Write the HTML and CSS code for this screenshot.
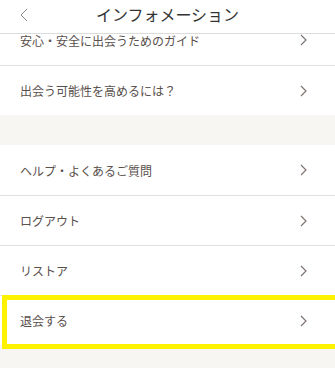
FILE: index.html
```html
<!DOCTYPE html>
<html lang="ja">
  <head>
    <meta charset="UTF-8" />
    <meta name="viewport" content="width=device-width, initial-scale=1.0" />
    <title>インフォメーション</title>
    <link rel="stylesheet" href="styles.css">
  </head>

  <body>
    <div class="header">
      <svg class="back" width="8" height="14" viewBox="0 0 8 14">
        <path d="M7 1 L1 7 L7 13" fill="none" stroke="#8a8a8a" stroke-width="1" />
      </svg>
      <h1>インフォメーション</h1>
    </div>

    <div class="list">
      <div class="group">
        <div class="row">
          <span>安心・安全に出会うためのガイド</span>
          <svg class="arrow" width="7" height="12" viewBox="0 0 7 12"><path d="M1 1 L6 6 L1 11" /></svg>
        </div>
        <div class="row">
          <span>出会う可能性を高めるには？</span>
          <svg class="arrow" width="7" height="12" viewBox="0 0 7 12"><path d="M1 1 L6 6 L1 11" /></svg>
        </div>
      </div>

      <div class="group">
        <div class="row">
          <span>ヘルプ・よくあるご質問</span>
          <svg class="arrow" width="7" height="12" viewBox="0 0 7 12"><path d="M1 1 L6 6 L1 11" /></svg>
        </div>
        <div class="row">
          <span>ログアウト</span>
          <svg class="arrow" width="7" height="12" viewBox="0 0 7 12"><path d="M1 1 L6 6 L1 11" /></svg>
        </div>
        <div class="row">
          <span>リストア</span>
          <svg class="arrow" width="7" height="12" viewBox="0 0 7 12"><path d="M1 1 L6 6 L1 11" /></svg>
        </div>
        <div class="row marked">
          <span>退会する</span>
          <svg class="arrow" width="7" height="12" viewBox="0 0 7 12"><path d="M1 1 L6 6 L1 11" /></svg>
          <div class="highlight"></div>
        </div>
      </div>
    </div>
  </body>
</html>
```

FILE: styles.css
```css
* {
  margin: 0;
  padding: 0;
  box-sizing: border-box;
}

body {
  background-color: #f7f6f3;
  font-family: "Noto Sans CJK JP", "Noto Sans", sans-serif;
  overflow: hidden;
}

.header {
  position: absolute;
  top: 0;
  left: 0;
  right: 0;
  z-index: 2;
  height: 34px;
  background-color: #fff;
  border-bottom: 1px solid #dcdcdc;
  display: flex;
  align-items: center;
  justify-content: center;
}

.header h1 {
  font-size: 16px;
  font-weight: normal;
  color: #333;
  margin-top: -6px;
}

.back {
  position: absolute;
  left: 20px;
  top: 8px;
}

.list {
  padding-top: 15px;
}

.group {
  background-color: #fff;
  margin-bottom: 30px;
}

.row {
  position: relative;
  height: 50px;
  display: flex;
  align-items: center;
  justify-content: space-between;
  padding: 0 28px 0 20px;
  font-size: 12px;
  color: #5a504c;
  border-top: 1px solid #e3e0dd;
}

.row:first-child {
  border-top: none;
}

.arrow path {
  fill: none;
  stroke: #7d7470;
  stroke-width: 1.2;
}

.highlight {
  position: absolute;
  top: -1px;
  left: 2px;
  right: -10px;
  height: 54px;
  border: 5px solid #fff200;
}
```
